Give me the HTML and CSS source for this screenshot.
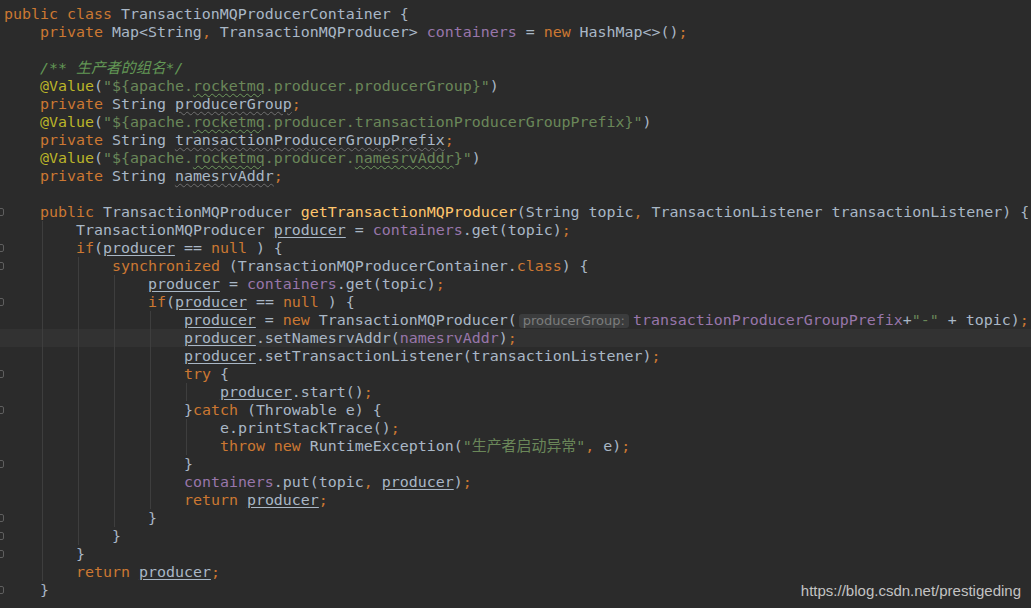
FILE: index.html
```html
<!DOCTYPE html>
<html lang="zh">
<head>
    <meta charset="UTF-8">
    <title>TransactionMQProducerContainer.java</title>
    <link rel="stylesheet" href="styles.css">
</head>
<body>
    <!-- 编辑器区域 -->
    <div class="editor">
        <div class="ln"><span class="gut"></span><span class="code"><span class="k">public class</span> TransactionMQProducerContainer {</span></div>
        <div class="ln"><span class="gut"></span><span class="code"><span class="i">    </span><span class="k">private</span> Map&lt;String<span class="p">,</span> TransactionMQProducer&gt; <span class="f">containers</span> = <span class="k">new</span> HashMap&lt;&gt;()<span class="p">;</span></span></div>
        <div class="ln"><span class="gut"></span><span class="code"></span></div>
        <div class="ln"><span class="gut"></span><span class="code"><span class="i">    </span><span class="c">/** 生产者的组名*/</span></span></div>
        <div class="ln"><span class="gut"></span><span class="code"><span class="i">    </span><span class="a">@Value</span>(<span class="s">"${apache.<span class="w">rocketmq</span>.producer.producerGroup}"</span>)</span></div>
        <div class="ln"><span class="gut"></span><span class="code"><span class="i">    </span><span class="k">private</span> String <span class="wf">producerGroup</span><span class="p">;</span></span></div>
        <div class="ln"><span class="gut"></span><span class="code"><span class="i">    </span><span class="a">@Value</span>(<span class="s">"${apache.<span class="w">rocketmq</span>.producer.transactionProducerGroupPrefix}"</span>)</span></div>
        <div class="ln"><span class="gut"></span><span class="code"><span class="i">    </span><span class="k">private</span> String <span class="wf">transactionProducerGroupPrefix</span><span class="p">;</span></span></div>
        <div class="ln"><span class="gut"></span><span class="code"><span class="i">    </span><span class="a">@Value</span>(<span class="s">"${apache.<span class="w">rocketmq</span>.producer.<span class="w">namesrvAddr</span>}"</span>)</span></div>
        <div class="ln"><span class="gut"></span><span class="code"><span class="i">    </span><span class="k">private</span> String <span class="wf">namesrvAddr</span><span class="p">;</span></span></div>
        <div class="ln"><span class="gut"></span><span class="code"></span></div>
        <div class="ln"><span class="gut"><span class="fold"></span></span><span class="code"><span class="i">    </span><span class="k">public</span> TransactionMQProducer <span class="m">getTransactionMQProducer</span>(String topic<span class="p">,</span> TransactionListener transactionListener) {</span></div>
        <div class="ln"><span class="gut"></span><span class="code"><span class="i">    </span><span class="i g">    </span>TransactionMQProducer <span class="u">producer</span> = <span class="f">containers</span>.get(topic)<span class="p">;</span></span></div>
        <div class="ln"><span class="gut"><span class="fold"></span></span><span class="code"><span class="i">    </span><span class="i g">    </span><span class="k">if</span>(<span class="u">producer</span> == <span class="k">null</span> ) {</span></div>
        <div class="ln"><span class="gut"><span class="fold"></span></span><span class="code"><span class="i">    </span><span class="i g">    </span><span class="i g">    </span><span class="k">synchronized</span> (TransactionMQProducerContainer.<span class="k">class</span>) {</span></div>
        <div class="ln"><span class="gut"></span><span class="code"><span class="i">    </span><span class="i g">    </span><span class="i g">    </span><span class="i g">    </span><span class="u">producer</span> = <span class="f">containers</span>.get(topic)<span class="p">;</span></span></div>
        <div class="ln"><span class="gut"><span class="fold"></span></span><span class="code"><span class="i">    </span><span class="i g">    </span><span class="i g">    </span><span class="i g">    </span><span class="k">if</span>(<span class="u">producer</span> == <span class="k">null</span> ) {</span></div>
        <div class="ln"><span class="gut"></span><span class="code"><span class="i">    </span><span class="i g">    </span><span class="i g">    </span><span class="i g">    </span><span class="i g">    </span><span class="u">producer</span> = <span class="k">new</span> TransactionMQProducer(<span class="hint">producerGroup:</span><span class="f">transactionProducerGroupPrefix</span>+<span class="s">"-"</span> + topic)<span class="p">;</span></span></div>
        <div class="ln cur"><span class="gut"></span><span class="code"><span class="i">    </span><span class="i g">    </span><span class="i g">    </span><span class="i g">    </span><span class="i g">    </span><span class="u">producer</span>.setNamesrvAddr(<span class="f">namesrvAddr</span>)<span class="p">;</span></span></div>
        <div class="ln"><span class="gut"></span><span class="code"><span class="i">    </span><span class="i g">    </span><span class="i g">    </span><span class="i g">    </span><span class="i g">    </span><span class="u">producer</span>.setTransactionListener(transactionListener)<span class="p">;</span></span></div>
        <div class="ln"><span class="gut"><span class="fold"></span></span><span class="code"><span class="i">    </span><span class="i g">    </span><span class="i g">    </span><span class="i g">    </span><span class="i g">    </span><span class="k">try</span> {</span></div>
        <div class="ln"><span class="gut"></span><span class="code"><span class="i">    </span><span class="i g">    </span><span class="i g">    </span><span class="i g">    </span><span class="i g">    </span><span class="i g">    </span><span class="u">producer</span>.start()<span class="p">;</span></span></div>
        <div class="ln"><span class="gut"><span class="fold"></span></span><span class="code"><span class="i">    </span><span class="i g">    </span><span class="i g">    </span><span class="i g">    </span><span class="i g">    </span>}<span class="k">catch</span> (Throwable e) {</span></div>
        <div class="ln"><span class="gut"></span><span class="code"><span class="i">    </span><span class="i g">    </span><span class="i g">    </span><span class="i g">    </span><span class="i g">    </span><span class="i g">    </span>e.printStackTrace()<span class="p">;</span></span></div>
        <div class="ln"><span class="gut"></span><span class="code"><span class="i">    </span><span class="i g">    </span><span class="i g">    </span><span class="i g">    </span><span class="i g">    </span><span class="i g">    </span><span class="k">throw new</span> RuntimeException(<span class="s">"生产者启动异常"</span><span class="p">,</span> e)<span class="p">;</span></span></div>
        <div class="ln"><span class="gut"><span class="fold"></span></span><span class="code"><span class="i">    </span><span class="i g">    </span><span class="i g">    </span><span class="i g">    </span><span class="i g">    </span>}</span></div>
        <div class="ln"><span class="gut"></span><span class="code"><span class="i">    </span><span class="i g">    </span><span class="i g">    </span><span class="i g">    </span><span class="i g">    </span><span class="f">containers</span>.put(topic<span class="p">,</span> <span class="u">producer</span>)<span class="p">;</span></span></div>
        <div class="ln"><span class="gut"></span><span class="code"><span class="i">    </span><span class="i g">    </span><span class="i g">    </span><span class="i g">    </span><span class="i g">    </span><span class="k">return</span> <span class="u">producer</span><span class="p">;</span></span></div>
        <div class="ln"><span class="gut"><span class="fold"></span></span><span class="code"><span class="i">    </span><span class="i g">    </span><span class="i g">    </span><span class="i g">    </span>}</span></div>
        <div class="ln"><span class="gut"><span class="fold"></span></span><span class="code"><span class="i">    </span><span class="i g">    </span><span class="i g">    </span>}</span></div>
        <div class="ln"><span class="gut"><span class="fold"></span></span><span class="code"><span class="i">    </span><span class="i g">    </span>}</span></div>
        <div class="ln"><span class="gut"></span><span class="code"><span class="i">    </span><span class="i g">    </span><span class="k">return</span> <span class="u">producer</span><span class="p">;</span></span></div>
        <div class="ln"><span class="gut"><span class="fold"></span></span><span class="code"><span class="i">    </span>}</span></div>
    </div>

    <!-- 水印 -->
    <div class="mark">https://blog.csdn.net/prestigeding</div>
</body>
</html>
```

FILE: styles.css
```css
body {
    margin: 0;
    height: 608px;
    overflow: hidden;
    position: relative;
    background-color: #2b2b2b;
}
.editor {
    padding-top: 5px;
    font-family: "DejaVu Sans Mono", "Noto Sans CJK SC", monospace;
    font-size: 14.95px;
    color: #a9b7c6;
}
.ln {
    display: flex;
    height: 18px;
    line-height: 18px;
    white-space: pre;
}
.cur {
    background-color: #323232;
}
.gut {
    flex: none;
    width: 4px;
    overflow: hidden;
    display: flex;
    align-items: center;
}
.fold {
    flex: none;
    width: 6px;
    height: 6px;
    margin-left: -4px;
    border: 1px solid #5f5f5f;
    border-radius: 2px;
}
.code {
    flex: none;
}
.i {
    display: inline-block;
    height: 18px;
    vertical-align: top;
}
.g {
    background: linear-gradient(#3e3e3e, #3e3e3e) 2px 0 / 1px 100% no-repeat;
}
.k, .p {
    color: #cc7832;
}
.f {
    color: #9876aa;
}
.s {
    color: #6a8759;
}
.c {
    color: #629755;
    font-style: italic;
}
.a {
    color: #bbb529;
}
.m {
    color: #ffc66d;
}
.u {
    text-decoration: underline;
    text-underline-offset: 2px;
}
.w {
    text-decoration: underline wavy #6f9a5e;
    text-decoration-thickness: 1px;
    text-underline-offset: 2px;
}
.wf {
    text-decoration: underline wavy #707070;
    text-decoration-thickness: 1px;
    text-underline-offset: 2px;
}
.hint {
    display: inline-block;
    height: 14px;
    line-height: 14px;
    padding: 0 4px;
    margin: 0 4px 0 2px;
    vertical-align: middle;
    font-family: "DejaVu Sans", sans-serif;
    font-size: 13px;
    color: #7c7c7c;
    background-color: #3b3c3d;
    border-radius: 3px;
}
.mark {
    position: absolute;
    right: 10px;
    bottom: 9px;
    font-family: "Liberation Sans", Arial, sans-serif;
    font-size: 15px;
    color: #c3c3c3;
}
```
